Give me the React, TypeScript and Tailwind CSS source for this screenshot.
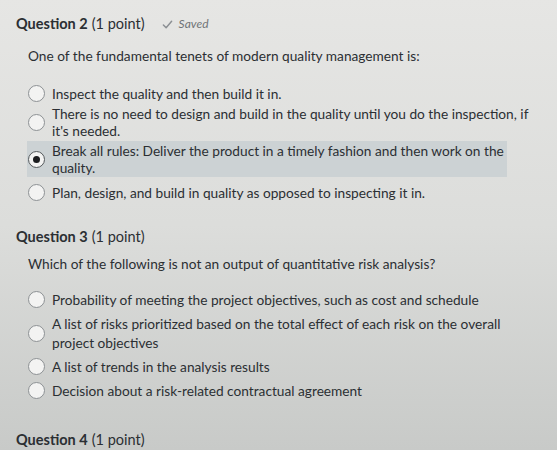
import React from 'react';

interface Option {
  lines: string[];
  selected?: boolean;
}

interface QuestionProps {
  number: number;
  prompt?: string;
  options?: Option[];
  saved?: boolean;
  loose?: boolean;
}

const Radio: React.FC<{ checked?: boolean }> = ({ checked }) => (
  <span
    className={`flex h-[17px] w-[17px] shrink-0 items-center justify-center rounded-full border bg-[#f3f3f2] ${
      checked ? 'border-[#55595c]' : 'border-[#8d9194]'
    }`}
  >
    {checked && <span className="h-[7px] w-[7px] rounded-full bg-[#1c1d1f]" />}
  </span>
);

const Question: React.FC<QuestionProps> = ({ number, prompt, options, saved, loose }) => (
  <section className={loose ? 'pb-[29px]' : 'pb-[25px]'}>
    <h2 className="flex items-center text-[14.5px] leading-[20px]">
      <span className="font-bold">Question {number}</span>
      <span className="ml-1">(1 point)</span>
      {saved && (
        <span className="ml-[17px] flex items-center text-[12px] italic text-[#6f7377]">
          <svg className="mr-[6px] h-[11px] w-[11px]" viewBox="0 0 12 12" fill="none">
            <path d="M1.5 6.5l3 3 6-7" stroke="#8b8f93" strokeWidth="1.6" strokeLinecap="round" strokeLinejoin="round" />
          </svg>
          Saved
        </span>
      )}
    </h2>
    {prompt && (
      <p className={`${loose ? 'mt-[7px]' : 'mt-[12px]'} pl-3 text-[13.7px] leading-[20px]`}>{prompt}</p>
    )}
    {options && (
      <div className={`flex flex-col pl-[11px] ${loose ? 'mt-[15px] gap-[3px]' : 'mt-[18px] gap-[1px]'}`}>
        {options.map((o) => (
          <label
            key={o.lines[0]}
            className={`flex w-fit items-center gap-[7px] py-[1px] pl-[1px] pr-[3px] ${
              o.selected ? 'mb-[5px] bg-[#ccd2d4]' : ''
            }`}
          >
            <Radio checked={o.selected} />
            <span className={`flex flex-col text-[13.7px] ${loose ? 'leading-[19px]' : 'leading-[17px]'}`}>
              {o.lines.map((l) => (
                <span key={l} className="whitespace-nowrap">
                  {l}
                </span>
              ))}
            </span>
          </label>
        ))}
      </div>
    )}
  </section>
);

export default function App() {
  return (
    <div className="h-[450px] overflow-hidden bg-gradient-to-b from-[#e6e6e4] via-[#dcdddb] to-[#c8cac8] pl-4 pt-[14px] font-['Lato',sans-serif] text-[#2b2f33]">
      <Question
        number={2}
        saved
        prompt="One of the fundamental tenets of modern quality management is:"
        options={[
          { lines: ['Inspect the quality and then build it in.'] },
          { lines: ['There is no need to design and build in the quality until you do the inspection, if', "it's needed."] },
          { lines: ['Break all rules: Deliver the product in a timely fashion and then work on the', 'quality.'], selected: true },
          { lines: ['Plan, design, and build in quality as opposed to inspecting it in.'] },
        ]}
      />
      <Question
        number={3}
        loose
        prompt="Which of the following is not an output of quantitative risk analysis?"
        options={[
          { lines: ['Probability of meeting the project objectives, such as cost and schedule'] },
          { lines: ['A list of risks prioritized based on the total effect of each risk on the overall', 'project objectives'] },
          { lines: ['A list of trends in the analysis results'] },
          { lines: ['Decision about a risk-related contractual agreement'] },
        ]}
      />
      <Question number={4} />
    </div>
  );
}
